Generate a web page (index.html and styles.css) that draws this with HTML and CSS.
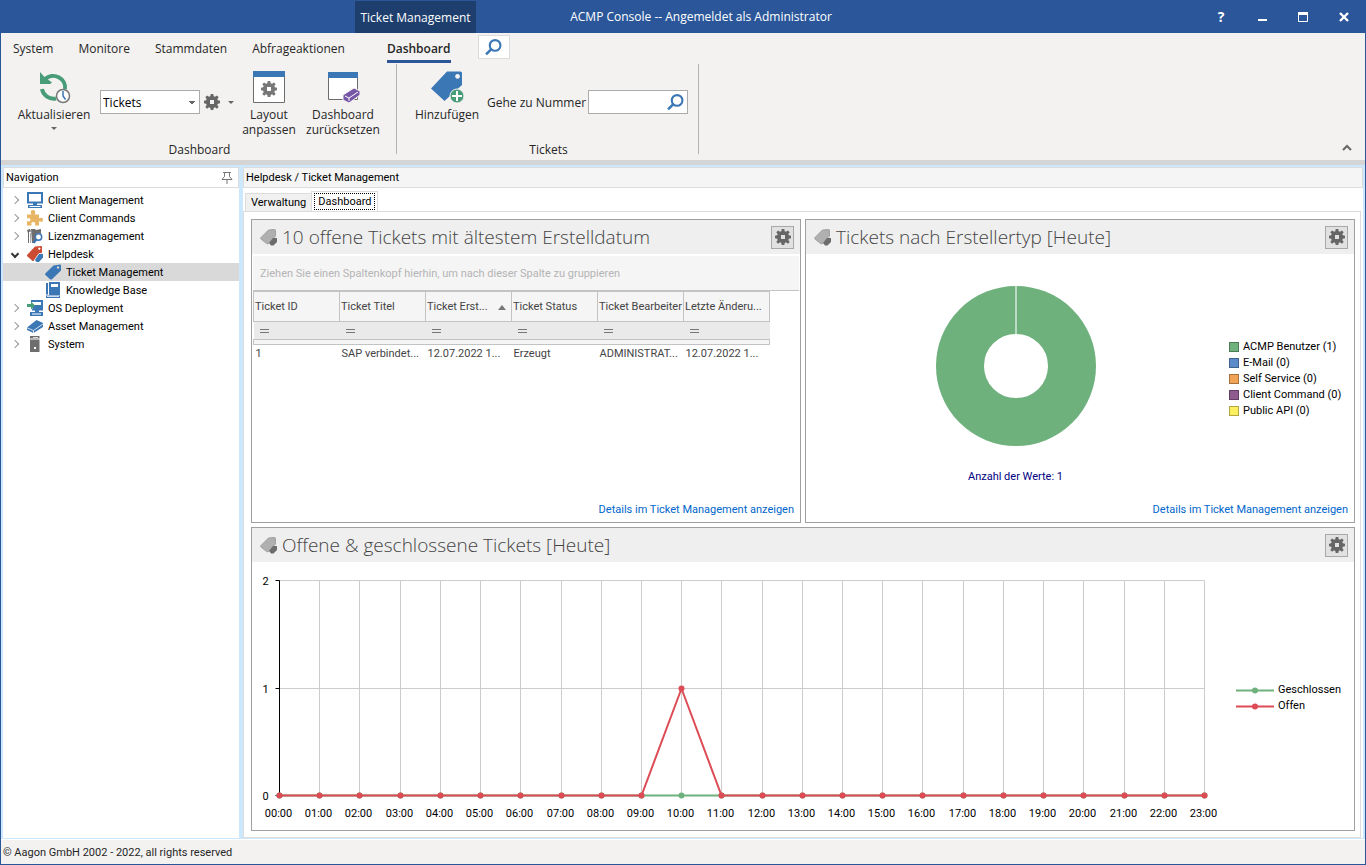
FILE: index.html
```
<!DOCTYPE html>
<html lang="de">
<head>
  <meta charset="UTF-8" />
  <meta name="viewport" content="width=device-width, initial-scale=1.0" />
  <title>ACMP Console</title>
  <link rel="stylesheet" href="styles.css">
</head>
<body>
  <!-- Icon sprite -->
  <svg class="sprite" aria-hidden="true">
    <symbol id="i-gear" viewBox="0 0 16 16">
      <path fill="currentColor" fill-rule="evenodd" d="M6.700 0h2.600l.4 2.200 1.300.6 1.900-1.400 1.800 1.800-1.400 1.900.6 1.200 2.100.4v2.600l-2.100.4-.6 1.300 1.400 1.900-1.800 1.800-1.900-1.400-1.300.6L9.300 16H6.700l-.4-2.100-1.300-.6-1.900 1.400-1.800-1.800 1.400-1.900-.6-1.300L0 9.300V6.700l2.100-.4.6-1.200-1.400-1.900 1.800-1.800L5 2.800l1.300-.6zM6 6v4h4V6z"/>
    </symbol>
    <symbol id="i-search" viewBox="0 0 16 16">
      <circle cx="9.500" cy="6" r="5" fill="none" stroke="#3b76b5" stroke-width="2"/>
      <path d="M6 9.500L1 14.500" stroke="#3b76b5" stroke-width="2.400"/>
    </symbol>
    <symbol id="i-tag" viewBox="0 0 16 16">
      <path fill="#3b76b5" fill-rule="evenodd" d="M8.500 1.500L15 .5q1 0 1 1v5L7 15.200q-1 .8-2 0L.5 11q-.8-.8 0-1.700zM13 2.300a1.200 1.200 0 1 0 .1 0z"/>
    </symbol>
    <symbol id="i-tags-gray" viewBox="0 0 18 18">
      <path fill="#b0b0b0" stroke="#a0a0a0" fill-rule="evenodd" d="M8.500 2L14.500 1.500q1 0 1 1V8l-7 7.500q-1 .8-2 0L1 11q-.7-.7 0-1.500zM13 3a1 1 0 1 0 .1 0z"/>
      <path fill="#6c6c6c" d="M13 10h4v4l-3.500 3.500H11L9 15z"/>
    </symbol>
    <symbol id="i-monitor" viewBox="0 0 16 16">
      <path fill="none" stroke="#3b76b5" stroke-width="2" d="M1 1h14v9.500H1z"/>
      <path fill="#3b76b5" d="M6 11h4v2H6zM1 13h14v3H1z"/>
      <path stroke="#fff" d="M2.500 14.500h11"/>
    </symbol>
    <symbol id="i-puzzle" viewBox="0 0 16 16">
      <path fill="#e8b565" d="M0 4.500h4C4.800 3.500 3 2.500 4 1c1-1.300 3-1.300 4 0 .9 1.500-.7 2.500 0 3.500h4V8c1 .8 1.600-.8 3-.2 1.300.8 1.300 3.200 0 4-1.400.6-2-1-3-.2V15.500H8.300c-.8-1 .5-2-.6-3-1-.8-2.500-.6-3.200.2-.6 1 .5 1.800-.2 2.800H0v-4c1-.8 2 .5 3-.5.8-1 .6-2-.2-2.700C2 7.800 1 9 0 8z"/>
    </symbol>
    <symbol id="i-license" viewBox="0 0 16 16">
      <path fill="#6e6e6e" d="M0 2l3-1 1 2.500L2 4v11H1V5zM4 1h4l1 1 5-1v5l-3-1-3 3v7H5z"/>
      <path fill="#aaa" d="M3 5h1v10H3z"/>
      <circle cx="11.500" cy="9" r="3.200" fill="#fff" stroke="#3b76b5" stroke-width="1.500"/>
      <path stroke="#3b76b5" stroke-width="2" d="M9.500 11.500L6.500 15"/>
    </symbol>
    <symbol id="i-helpdesk" viewBox="0 0 16 16">
      <path fill="#cc4b33" fill-rule="evenodd" d="M8 .5L14 0q1 0 1 1v5.500L7 14.500q-1 1-2 0L.5 10.500q-1-1 0-2zM12.300 1.500a1.100 1.100 0 1 0 .1 0z"/>
      <path fill="#3b76b5" stroke="#fff" stroke-width=".8" d="M12 7.500h4.500v4L12 16.500H9.500L7.500 14z"/>
    </symbol>
    <symbol id="i-book" viewBox="0 0 16 16">
      <path fill="#3b76b5" d="M1 1h2v11.500H1zM4 0h11v13H4zM1 13.500h14V16H1z"/>
      <path fill="#fff" d="M6 2h7v3H6zM2 14.300h12v.8H2z"/>
    </symbol>
    <symbol id="i-deploy" viewBox="0 0 16 16">
      <path fill="none" stroke="#3b76b5" stroke-width="2" d="M4 1h11v8.500H5"/>
      <path fill="#3b76b5" d="M6 5h8v4H6zM8 10h4v2H8zM3 12h13v4H3z"/>
      <path stroke="#fff" d="M5 14h9"/>
      <path fill="#489c78" d="M0 4h4V1.500L8 5.500 4 9.500V7H0z"/>
    </symbol>
    <symbol id="i-asset" viewBox="0 0 16 16">
      <path fill="#3b76b5" d="M0 9.500L9.500 2 16 5v4L6.500 15 0 12z"/>
      <path fill="none" stroke="#fff" stroke-width=".8" d="M0 9.800l6.500 2.700L16 6M6.500 12.500V15"/>
    </symbol>
    <symbol id="i-server" viewBox="0 0 16 16">
      <path fill="#6e6e6e" d="M3 0h9.500v2.500H3zM3 3.500h9.500V16H3z"/>
      <path fill="#fff" d="M6 1h5v.8H6zM7 11h2v2H7z"/>
    </symbol>
  </svg>

  <div class="window">
    <header class="titlebar">
      <div class="context-tab">Ticket Management</div>
      <div class="window-title">ACMP Console -- Angemeldet als Administrator</div>
      <div class="window-buttons">
        <button aria-label="Hilfe">?</button>
        <button aria-label="Minimieren"><svg width="10" height="10"><path d="M1 8h9" stroke="#fff" stroke-width="2"/></svg></button>
        <button aria-label="Maximieren"><svg width="10" height="10"><path d="M.5.5h9v9h-9z" fill="none" stroke="#fff"/><path d="M0 1.500h10" stroke="#fff" stroke-width="3"/></svg></button>
        <button aria-label="Schließen"><svg width="10" height="10"><path d="M1 1l8 8M9 1L1 9" stroke="#fff" stroke-width="2.400"/></svg></button>
      </div>
    </header>

    <nav class="ribbon-tabs">
      <a href="#">System</a>
      <a href="#">Monitore</a>
      <a href="#">Stammdaten</a>
      <a href="#">Abfrageaktionen</a>
      <a href="#" class="active">Dashboard</a>
      <button class="tab-search" aria-label="Suchen"><svg width="17" height="17"><use href="#i-search"/></svg></button>
    </nav>

    <section class="ribbon">
      <div class="ribbon-group">
        <div class="ribbon-items">
          <button class="big-button refresh">
            <svg width="34" height="34" viewBox="0 0 34 34">
              <path fill="none" stroke="#489c78" stroke-width="4" d="M8 9A12 11.500 0 0 1 28 19M5 19A12 11.500 0 0 0 19 28.500"/>
              <path fill="#489c78" d="M3 2l4 4.500 8 6-2 1.500H3z"/>
              <circle cx="26" cy="26" r="6.500" fill="#fff" stroke="#777" stroke-width="1.500"/>
              <path fill="none" stroke="#3b76b5" stroke-width="1.500" d="M26 21v5l2.500 3.500"/>
            </svg>
            <span>Aktualisieren</span>
            <i class="arrow"></i>
          </button>
          <div class="field-row">
            <select class="view-select" aria-label="Dashboard auswählen"><option>Tickets</option></select>
            <button class="gear-menu" aria-label="Optionen"><svg width="16" height="16"><use href="#i-gear"/></svg><i class="arrow"></i></button>
          </div>
          <button class="big-button layout">
            <svg width="34" height="34" viewBox="0 0 34 34">
              <path fill="#fff" stroke="#6c6c6c" d="M1.500 1.500h31v31h-31z"/>
              <path fill="#3b76b5" d="M1 1h32v6H1z"/>
              <use href="#i-gear" x="9" y="11" width="16" height="16" color="#777"/>
            </svg>
            <span>Layout anpassen</span>
          </button>
          <button class="big-button reset">
            <svg width="34" height="34" viewBox="0 0 34 34">
              <path fill="#fff" stroke="#6c6c6c" d="M2.500 2.500h29v27h-29z"/>
              <path fill="#3b76b5" d="M2 2h30v6H2z"/>
              <path fill="#7557a5" stroke="#f3f2f1" d="M17 25l11-7 6 3v4l-11 8-6-3z"/>
              <path fill="none" stroke="#fff" d="M19 26l4 2 9-6M23 28v3"/>
            </svg>
            <span>Dashboard zurücksetzen</span>
          </button>
        </div>
        <div class="group-label">Dashboard</div>
      </div>
      <div class="ribbon-group tickets">
        <div class="ribbon-items">
          <button class="big-button add">
            <svg width="34" height="34" viewBox="0 0 34 34">
              <path fill="#3b76b5" fill-rule="evenodd" d="M17 1.500h13.500q1.500 0 1.500 1.500v12L14.500 31 1 18.500zM27.500 4a2.400 2.400 0 1 0 .1 0z"/>
              <circle cx="27" cy="26" r="7" fill="#489c78" stroke="#f3f2f1"/>
              <path stroke="#fff" stroke-width="2" d="M22 26h10M27 21v10"/>
            </svg>
            <span>Hinzufügen</span>
          </button>
          <div class="field-row">
            <label for="ticket-number">Gehe zu Nummer</label>
            <div class="number-field">
              <input type="text" id="ticket-number">
              <svg width="17" height="17"><use href="#i-search"/></svg>
            </div>
          </div>
        </div>
        <div class="group-label">Tickets</div>
      </div>
      <button class="collapse" aria-label="Menüband minimieren"><svg width="10" height="8"><path d="M1 6l4-4 4 4" fill="none" stroke="#666" stroke-width="2"/></svg></button>
    </section>

    <div class="workspace">
      <aside class="sidebar">
        <div class="pane-title">
          <span>Navigation</span>
          <svg width="12" height="14" viewBox="0 0 12 14"><path d="M2 1.500h8M3.500 1v4.500L1 8.500h10L8.500 5.500V1M6 9v4" fill="none" stroke="#777"/></svg>
        </div>
        <ul class="tree">
          <li><i class="chevron"></i><svg><use href="#i-monitor"/></svg><a href="#">Client Management</a></li>
          <li><i class="chevron"></i><svg><use href="#i-puzzle"/></svg><a href="#">Client Commands</a></li>
          <li><i class="chevron"></i><svg><use href="#i-license"/></svg><a href="#">Lizenzmanagement</a></li>
          <li><i class="chevron open"></i><svg><use href="#i-helpdesk"/></svg><a href="#">Helpdesk</a></li>
          <li class="child selected"><svg><use href="#i-tag"/></svg><a href="#">Ticket Management</a></li>
          <li class="child"><svg><use href="#i-book"/></svg><a href="#">Knowledge Base</a></li>
          <li><i class="chevron"></i><svg><use href="#i-deploy"/></svg><a href="#">OS Deployment</a></li>
          <li><i class="chevron"></i><svg><use href="#i-asset"/></svg><a href="#">Asset Management</a></li>
          <li><i class="chevron"></i><svg><use href="#i-server"/></svg><a href="#">System</a></li>
        </ul>
      </aside>

      <main class="content">
        <div class="pane-title breadcrumb">Helpdesk / Ticket Management</div>
        <div class="page-tabs">
          <button>Verwaltung</button>
          <button class="active"><span>Dashboard</span></button>
        </div>
        <div class="dashboard">
          <section class="panel">
            <div class="panel-head">
              <svg width="18" height="18"><use href="#i-tags-gray"/></svg>
              <h2>10 offene Tickets mit ältestem Erstelldatum</h2>
              <button aria-label="Einstellungen"><svg width="16" height="16"><use href="#i-gear"/></svg></button>
            </div>
            <div class="group-hint">Ziehen Sie einen Spaltenkopf hierhin, um nach dieser Spalte zu gruppieren</div>
            <table class="tickets-table">
              <thead>
                <tr>
                  <th>Ticket ID</th>
                  <th>Ticket Titel</th>
                  <th class="sorted">Ticket Erst...</th>
                  <th>Ticket Status</th>
                  <th>Ticket Bearbeiter</th>
                  <th>Letzte Änderu...</th>
                </tr>
                <tr class="filter">
                  <td><i></i></td><td><i></i></td><td><i></i></td><td><i></i></td><td><i></i></td><td><i></i></td>
                </tr>
                <tr class="band"><td colspan="6"></td></tr>
              </thead>
              <tbody>
                <tr>
                  <td>1</td>
                  <td>SAP verbindet...</td>
                  <td>12.07.2022 1...</td>
                  <td>Erzeugt</td>
                  <td>ADMINISTRAT...</td>
                  <td>12.07.2022 1...</td>
                </tr>
              </tbody>
            </table>
            <a class="details" href="#">Details im Ticket Management anzeigen</a>
          </section>

          <section class="panel">
            <div class="panel-head">
              <svg width="18" height="18"><use href="#i-tags-gray"/></svg>
              <h2>Tickets nach Erstellertyp [Heute]</h2>
              <button aria-label="Einstellungen"><svg width="16" height="16"><use href="#i-gear"/></svg></button>
            </div>
            <div class="donut-body">
              <div class="donut">
                <svg width="160" height="160" viewBox="0 0 160 160">
                  <circle cx="80" cy="80" r="56" fill="none" stroke="#6fb17d" stroke-width="48"/>
                  <path d="M80 0v48" stroke="#bbdcc2" stroke-width="2"/>
                </svg>
                <p>Anzahl der Werte: 1</p>
              </div>
              <ul class="legend">
                <li><i class="green"></i>ACMP Benutzer (1)</li>
                <li><i class="blue"></i>E-Mail (0)</li>
                <li><i class="orange"></i>Self Service (0)</li>
                <li><i class="purple"></i>Client Command (0)</li>
                <li><i class="yellow"></i>Public API (0)</li>
              </ul>
            </div>
            <a class="details" href="#">Details im Ticket Management anzeigen</a>
          </section>

          <section class="panel wide">
            <div class="panel-head">
              <svg width="18" height="18"><use href="#i-tags-gray"/></svg>
              <h2>Offene &amp; geschlossene Tickets [Heute]</h2>
              <button aria-label="Einstellungen"><svg width="16" height="16"><use href="#i-gear"/></svg></button>
            </div>
            <div class="line-body">
              <div class="chart-box"><svg id="line-chart"></svg></div>
              <ul class="legend lines">
                <li><svg width="38" height="7"><path d="M0 3.500h38" stroke="#6fb17d" stroke-width="2"/><circle cx="19" cy="3.500" r="3" fill="#6fb17d"/></svg>Geschlossen</li>
                <li><svg width="38" height="7"><path d="M0 3.500h38" stroke="#dd4b55" stroke-width="2"/><circle cx="19" cy="3.500" r="3" fill="#dd4b55"/></svg>Offen</li>
              </ul>
            </div>
          </section>
        </div>
      </main>
    </div>

    <footer class="statusbar">© Aagon GmbH 2002 - 2022, all rights reserved</footer>
  </div>

  <script src="chart.js"></script>
</body>
</html>
```
FILE: styles.css
```
* {
  box-sizing: border-box;
}

body {
  margin: 0;
  font-family: Roboto, Tahoma, sans-serif;
  font-size: 11px;
  color: #000;
}

button, input, select {
  font: inherit;
  color: inherit;
}

button {
  padding: 0;
  border: none;
  background: none;
}

a {
  color: inherit;
  text-decoration: none;
}

ul {
  list-style: none;
  margin: 0;
  padding: 0;
}

svg {
  flex: none;
  display: block;
}

.sprite {
  position: absolute;
  width: 0;
  height: 0;
}

.window {
  display: flex;
  flex-direction: column;
  min-height: 100vh;
  border: 1px solid #2b579a;
  border-top: none;
  background: #f3f2f1;
}

/* Title bar */
.titlebar {
  display: grid;
  grid-template-columns: 354px 1fr 151px;
  height: 33px;
  background: #2b579a;
  color: #fff;
  font-family: "Open Sans", sans-serif;
  font-size: 12px;
}

.context-tab {
  grid-column: 1 / 3;
  grid-row: 1;
  width: 121px;
  height: 32px;
  margin: 1px 0 0 354px;
  line-height: 34px;
  text-align: center;
  white-space: nowrap;
  background: #1e3e6d;
}

.window-title {
  grid-column: 1 / 4;
  grid-row: 1;
  justify-self: center;
  padding-left: 36px;
  line-height: 34px;
}

.window-buttons {
  grid-column: 3;
  grid-row: 1;
  display: flex;
  justify-content: space-between;
  align-items: center;
  padding-right: 14px;
}

.window-buttons button {
  display: flex;
  justify-content: center;
  width: 14px;
  font-size: 14px;
  font-weight: bold;
  line-height: 16px;
}

/* Ribbon */
.ribbon-tabs {
  display: flex;
  align-items: flex-start;
  height: 31px;
  padding: 2px 12px;
  font-family: "Open Sans", sans-serif;
  font-size: 12px;
  color: #262626;
}

.ribbon-tabs a {
  padding-top: 2px;
  line-height: 24px;
  margin-right: 25px;
}

.ribbon-tabs .active {
  margin: 0 27px 0 17px;
  font-weight: 600;
  line-height: 22px;
  padding-top: 3px;
  border-bottom: 3px solid #2b579a;
}

.tab-search {
  display: flex;
  align-items: center;
  justify-content: center;
  width: 32px;
  height: 24px;
  border: 1px solid #dcdcdc;
  background: #fff;
}

.ribbon {
  display: flex;
  height: 101px;
  padding-left: 10px;
  border-bottom: 5px solid #d5d5d5;
  font-family: "Open Sans", sans-serif;
  font-size: 12px;
  color: #262626;
}

.ribbon-group {
  display: flex;
  flex-direction: column;
  justify-content: space-between;
  height: 90px;
  width: 386px;
  border-right: 1px solid #b5b3b1;
}

.ribbon-group.tickets {
  width: 302px;
  padding-left: 10px;
}

.ribbon-items {
  display: flex;
  align-items: flex-start;
}

.group-label {
  text-align: center;
  line-height: 16px;
  margin-bottom: -4px;
  padding-right: 8px;
}

.big-button {
  display: flex;
  flex-direction: column;
  align-items: center;
  padding-top: 6px;
  line-height: 15px;
}

.big-button svg {
  margin-bottom: 3px;
}

.refresh { width: 86px; }
.layout { width: 72px; }
.reset { width: 76px; }
.add { width: 80px; }

.arrow {
  border: 3px solid transparent;
  border-top-color: #666;
  border-bottom: none;
}

.big-button .arrow {
  margin-top: 5px;
}

.field-row {
  display: flex;
  align-items: center;
  padding-top: 26px;
}

.view-select {
  width: 100px;
  height: 24px;
  margin-left: 3px;
  padding: 0 2px;
  border: 1px solid #ababab;
  border-radius: 0;
  appearance: none;
  color: #000;
  background: #fff conic-gradient(from 315deg at 50% 100%, #666 90deg, transparent 0) no-repeat right 4px center / 6px 3px;
}

.gear-menu {
  display: flex;
  align-items: center;
  gap: 8px;
  width: 33px;
  padding-left: 4px;
  color: #666;
}

.number-field {
  display: flex;
  align-items: center;
  width: 100px;
  height: 24px;
  margin-left: 2px;
  padding-right: 3px;
  border: 1px solid #ababab;
  background: #fff;
}

.number-field input {
  flex: 1;
  min-width: 0;
  border: none;
}

.collapse {
  align-self: flex-end;
  margin: 0 13px 8px auto;
}

/* Work area */
.workspace {
  flex: 1;
  display: flex;
  gap: 4px;
  padding: 0 1px;
  border: 1px solid #cce8ff;
  border-top-width: 2px;
  background: #cce8ff;
}

.sidebar {
  width: 236px;
  background: #fff;
}

.pane-title {
  display: flex;
  justify-content: space-between;
  align-items: center;
  height: 21px;
  padding: 0 5px 0 2px;
  border: 1px solid #dcdcdc;
  background: #fff;
}

.tree {
  padding-top: 3px;
}

.tree li {
  display: flex;
  align-items: center;
  height: 18px;
  padding-left: 9px;
}

.tree li svg {
  width: 16px;
  height: 16px;
  margin: 0 5px 0 9px;
}

.tree .child {
  padding-left: 33px;
}

.tree .selected {
  background: #d9d9d9;
}

.chevron {
  width: 6px;
  height: 6px;
  border: solid #999;
  border-width: 1px 1px 0 0;
  transform: rotate(45deg);
}

.chevron.open {
  border-color: #333;
  border-width: 2px 2px 0 0;
  transform: rotate(135deg);
}

.content {
  flex: 1;
  display: flex;
  flex-direction: column;
  min-width: 0;
  background: #fff;
}

.breadcrumb {
  background: #f5f5f5;
}

.page-tabs {
  display: flex;
  align-items: flex-end;
  height: 23px;
  padding: 3px 2px 0;
}

.page-tabs button {
  height: 18px;
  padding: 0 5px;
  border: 1px solid #dcdcdc;
  border-bottom: none;
  background: #f0f0f0;
}

.page-tabs .active {
  height: 20px;
  margin-left: -1px;
  padding: 0 2px 1px;
  background: #fff;
}

.page-tabs .active span {
  display: block;
  padding: 0 3px;
  line-height: 15px;
  border: 1px dotted #000;
}

.dashboard {
  flex: 1;
  display: grid;
  grid-template-columns: 1fr 1fr;
  grid-template-rows: 1fr 1fr;
  gap: 4px;
  margin-right: 2px;
  padding: 7px 5px 6px 7px;
  border: 1px solid #dcdcdc;
}

/* Panels */
.panel {
  display: flex;
  flex-direction: column;
  min-width: 0;
  border: 1px solid #a0a0a0;
  background: #fff;
}

.panel.wide {
  grid-column: 1 / 3;
}

.panel-head {
  display: flex;
  align-items: center;
  height: 34px;
  padding: 0 6px 0 8px;
  background: #efefef;
}

.panel-head h2 {
  flex: 1;
  margin: 0 0 0 4px;
  font-family: "Open Sans", sans-serif;
  font-size: 19px;
  font-weight: 300;
  line-height: 32px;
  color: #444;
  white-space: nowrap;
}

.panel-head button {
  display: flex;
  align-items: center;
  justify-content: center;
  width: 23px;
  height: 23px;
  border: 1px solid #a8a8a8;
  background: #e1e1e1;
  color: #666;
}

.group-hint {
  height: 35px;
  margin: 2px 1px 0;
  padding-left: 7px;
  line-height: 36px;
  color: #b4b4b4;
  background: #f5f5f5;
  border-bottom: 1px solid #c3c3c3;
}

.tickets-table {
  width: 517px;
  margin-left: 1px;
  table-layout: fixed;
  border-collapse: collapse;
  color: #444;
  white-space: nowrap;
}

.tickets-table th {
  height: 30px;
  padding: 0 1px;
  text-align: left;
  font-weight: normal;
  background: #f5f5f5;
  border: 1px solid #c3c3c3;
}

.tickets-table .sorted::after {
  content: "";
  float: right;
  margin: 5px 4px 0 0;
  border: 4px solid transparent;
  border-bottom: 5px solid #777;
  border-top: none;
}

.tickets-table td {
  height: 18px;
  padding: 0 2px;
}

.filter td {
  background: #eaeaea;
}

.filter i {
  display: block;
  width: 9px;
  height: 4px;
  margin-left: 4px;
  border: solid #777;
  border-width: 1px 0;
}

.tickets-table .band td {
  height: 5px;
  background: #f5f5f5;
  border: 1px solid #c3c3c3;
}

.details {
  align-self: flex-end;
  margin: auto 6px 5px 0;
  line-height: 14px;
  color: #0066cc;
}

.donut-body {
  flex: 1;
  display: flex;
  align-items: center;
}

.donut {
  flex: 1;
  display: flex;
  flex-direction: column;
  align-items: center;
  padding: 12px 4px 0 0;
}

.donut p {
  margin: 24px 0 0;
  line-height: 14px;
  color: #000080;
}

.legend {
  width: 125px;
  line-height: 16px;
  white-space: nowrap;
}

.legend li {
  display: flex;
  align-items: center;
  gap: 4px;
}

.legend i {
  width: 10px;
  height: 10px;
  border: 1px solid rgba(0, 0, 0, 0.3);
}

.green { background: #6fb17d; }
.blue { background: #5b8bc9; }
.orange { background: #f0a355; }
.purple { background: #8f5b8f; }
.yellow { background: #fdf060; }

.line-body {
  flex: 1;
  display: flex;
  align-items: center;
}

.chart-box {
  flex: 1;
  align-self: stretch;
  position: relative;
}

/* The svg is sized by its box, so the chart can shrink again */
#line-chart {
  position: absolute;
  width: 100%;
  height: 100%;
}

.legend.lines {
  width: 118px;
  padding-top: 4px;
}

#line-chart .grid { stroke: #cccccc; }
#line-chart .axis { stroke: #000; }
#line-chart .closed { fill: none; stroke: #6fb17d; stroke-width: 2; }
#line-chart .open { fill: none; stroke: #dd4b55; stroke-width: 2; }
#line-chart .dot-closed { fill: #6fb17d; }
#line-chart .dot-open { fill: #dd4b55; }
#line-chart text { text-anchor: middle; }

.statusbar {
  height: 25px;
  padding-left: 2px;
  line-height: 26px;
  color: #262626;
  border-top: 1px solid #fff;
}
```
FILE: chart.js
```
const closed = new Array(24).fill(0);
const open = closed.map((v, hour) => (hour === 10 ? 1 : 0));

function drawChart() {
  const svg = document.getElementById("line-chart");
  const box = svg.parentElement.getBoundingClientRect();
  const left = 27, right = 32, top = 18, bottom = 35;
  const w = box.width - left - right;
  const h = box.height - top - bottom;
  const x = i => Math.round(left + (w * i) / 23) + 0.5;
  const y = v => Math.round(top + h - (h * v) / 2) + 0.5;
  let out = "";

  // Grid and hour labels
  for (let i = 0; i < 24; i++) {
    out += `<line class="grid" x1="${x(i)}" y1="${y(0)}" x2="${x(i)}" y2="${y(2)}"/>`;
    out += `<text x="${x(i) - 1}" y="${y(0) + 21}">${String(i).padStart(2, "0")}:00</text>`;
  }
  for (let v = 0; v <= 2; v++) {
    out += `<line class="grid" x1="${x(0)}" y1="${y(v)}" x2="${x(23)}" y2="${y(v)}"/>`;
    out += `<line class="axis" x1="${x(0) - 4}" y1="${y(v)}" x2="${x(0)}" y2="${y(v)}"/>`;
    out += `<text x="${x(0) - 14}" y="${y(v) + 4}">${v}</text>`;
  }
  out += `<line class="axis" x1="${x(0)}" y1="${y(0)}" x2="${x(0)}" y2="${y(2)}"/>`;

  // Series
  [["closed", closed], ["open", open]].forEach(([name, data]) => {
    out += `<polyline class="${name}" points="${data.map((v, i) => x(i) + "," + y(v)).join(" ")}"/>`;
    data.forEach((v, i) => {
      out += `<circle class="dot-${name}" cx="${x(i)}" cy="${y(v)}" r="3"/>`;
    });
  });

  svg.innerHTML = out;
}

drawChart();
window.addEventListener("resize", drawChart);
```
